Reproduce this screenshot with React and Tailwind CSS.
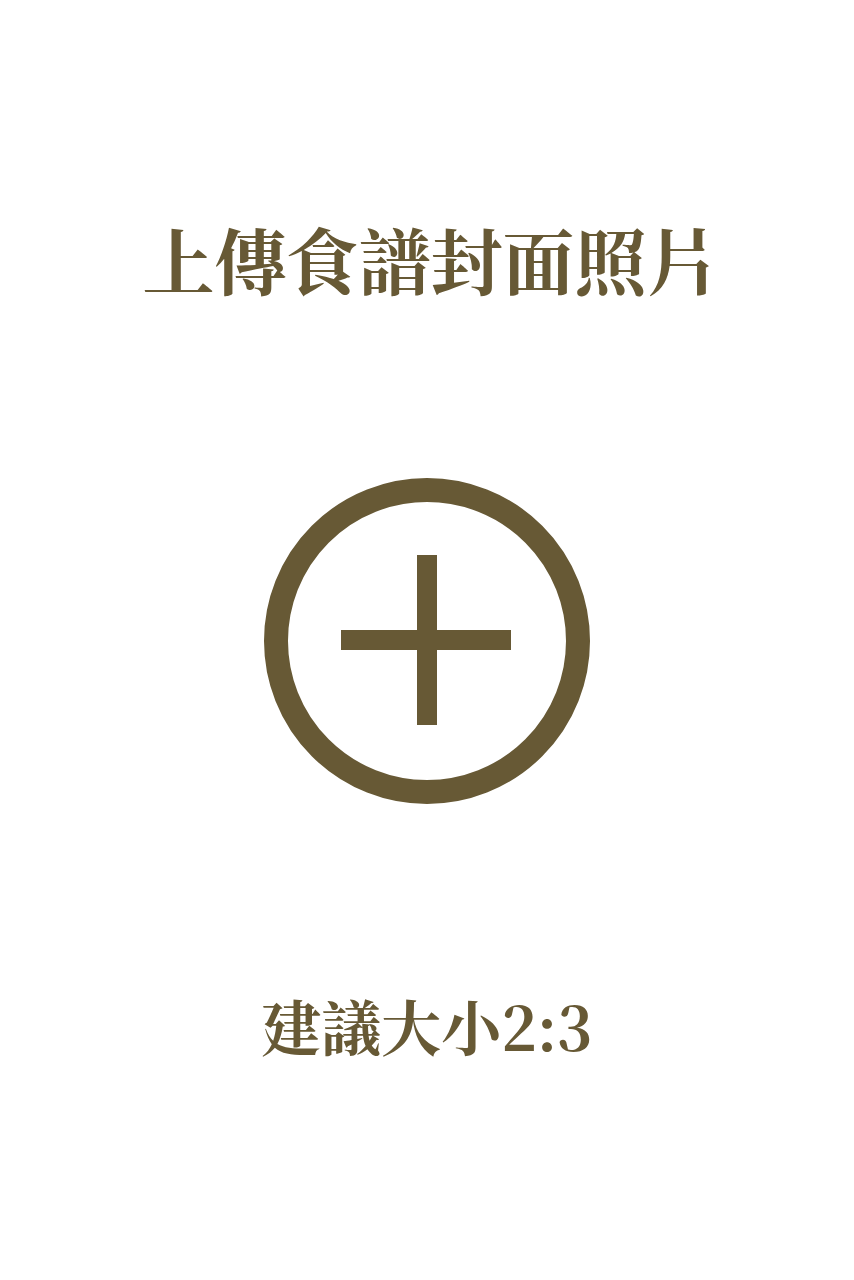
export default function App() {
  const font = { fontFamily: '"Noto Serif CJK TC", "Noto Serif CJK JP", "Liberation Serif", "Noto Sans CJK TC", serif' }

  return (
    <div className="w-full h-[1280px] bg-white flex flex-col items-center pt-[222px] text-[#675935]">
      {/* title */}
      <h1 className="text-[72px] leading-none font-bold h-[72px] pl-[7px]" style={font}>
        上傳食譜封面照片
      </h1>

      {/* upload button */}
      <button className="mt-[184px] w-[326px] h-[326px] flex items-center justify-center">
        <svg viewBox="0 0 326 326" width="326" height="326">
          <circle cx="163" cy="163" r="151" fill="none" stroke="#675935" strokeWidth="24" />
          <rect x="153" y="77" width="20" height="170" fill="#675935" />
          <rect x="77" y="152" width="170" height="20" fill="#675935" />
        </svg>
      </button>

      {/* hint */}
      <p className="mt-[191px] text-[60px] leading-none font-bold" style={font}>
        建議大小2:3
      </p>
    </div>
  )
}
